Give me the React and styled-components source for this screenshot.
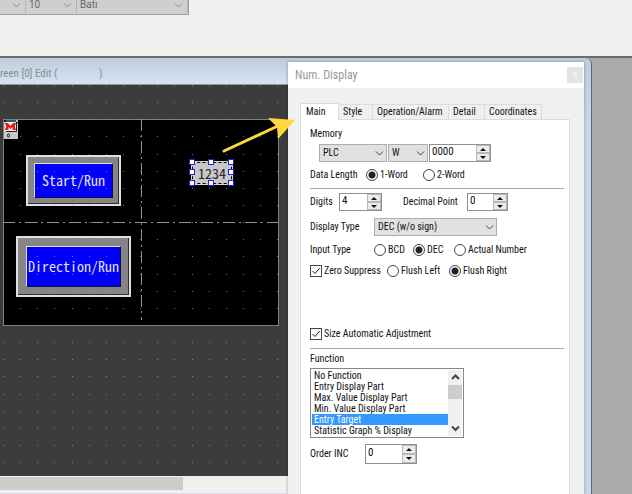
import React from "react";
import styled, { createGlobalStyle, css } from "styled-components";

const Global = createGlobalStyle`
  * { box-sizing: border-box; }
  body { margin: 0; background: #f0f0f0; }
  button, input, select { font: inherit; color: inherit; margin: 0; }
`;

const Desktop = styled.div`
  position: relative;
  display: flex;
  flex-direction: column;
  min-height: 100vh;
  overflow: hidden;
  background: #f0f0f0;
  font: 10px/12px "Roboto Condensed", Lato, sans-serif;
  color: #111;
`;

const Ribbon = styled.header`
  height: 56px;
`;

const FontBar = styled.div`
  display: flex;
  width: 189px;
  height: 15px;
  border-right: 1px solid #a0a0a0;
  border-bottom: 1px solid #a0a0a0;
  background: #d0d0d0;
  font: 10px/12px Roboto, sans-serif;
  color: #686868;
`;

const Drop = styled.span`
  position: relative;
  display: inline-flex;
  flex: ${(p) => (p.$grow ? "1" : "none")};
  width: ${(p) => p.$w}px;
  height: 18px;

  select {
    appearance: none;
    width: 100%;
    height: 100%;
    padding: 0 3px;
    border: 1px solid #adadad;
    border-radius: 0;
    background: #e1e1e1;
    line-height: 14px;
  }

  svg {
    position: absolute;
    right: 3px;
    top: 6px;
    pointer-events: none;
  }

  ${(p) =>
    p.$flat &&
    css`
      height: 13px;
      border-right: 1px solid #b4b4b4;
      select { border: 0; padding-bottom: 3px; background: #cfcfcf; line-height: 10px; }
      svg { top: 2px; right: 4px; }
    `}
`;

const Workspace = styled.main`
  flex: 1;
  display: flex;
  padding-right: 40px;
  border-top: 2px solid #6c6c6c;
  background: #ababab;
`;

const EditorWindow = styled.section`
  flex: 1;
  min-width: 0;
  display: flex;
  flex-direction: column;
  padding-right: 7px;
  border-right: 1px solid #5f666e;
  border-top-right-radius: 6px;
  background: linear-gradient(#bccddc, #c9d8e8 60px);
`;

const EditorTitle = styled.h1`
  margin: 0;
  height: 27px;
  padding-top: 8px;
  border-bottom: 1px solid #8e979f;
  background: linear-gradient(#bccddc, #d6e3f1);
  font: 11px/16px "Roboto Condensed", Roboto, sans-serif;
  color: #858d94;
  white-space: nowrap;
`;

const Blank = styled.span`
  display: inline-block;
  width: 39px;
`;

const Canvas = styled.div`
  position: relative;
  flex: 1;
  background: #3c3c3c;
  overflow: hidden;
`;

const Dots = styled.svg`
  position: absolute;
  inset: 0;
  width: 100%;
  height: 100%;
  pointer-events: none;
`;

const ScreenArea = styled.svg`
  position: absolute;
  left: 3px;
  top: 34px;
`;

const HmiButton = styled.button`
  position: absolute;
  left: ${(p) => p.$x}px;
  top: ${(p) => p.$y}px;
  width: ${(p) => p.$w}px;
  height: ${(p) => p.$h}px;
  padding: ${(p) => p.$pad}px;
  border: 2px solid #e0e0e0;
  box-shadow: inset -1px -1px 0 #303030;
  background: #858585;

  span {
    display: flex;
    align-items: center;
    justify-content: center;
    height: 100%;
    padding-bottom: 2px;
    border: 1px solid;
    border-color: #e0e0e0 #101040 #101040 #e0e0e0;
    background: #0000fa;
    color: #e4e4ff;
    font: 300 14px/16px "Noto Sans Mono CJK JP", "Liberation Mono", monospace;
    white-space: nowrap;
  }
`;

const NumberPart = styled.div`
  position: absolute;
  left: 192px;
  top: 77px;
  width: 40px;
  height: 22px;
  border: 1px dashed #000;
  outline: 1px solid #d8d8d8;
  background: #c8c8c8;
  color: #222;
  font: 300 14px/20px "Noto Sans Mono CJK JP", "Liberation Mono", monospace;
  text-align: center;
`;

const Handles = styled.svg`
  position: absolute;
  left: 189px;
  top: 74px;
`;

const HScroll = styled.div`
  height: 18px;
  padding: 1px 0 3px;
  background: #f0f0f0;
  border-bottom: 1px solid #d5e3f1;

  i { display: block; width: 183px; height: 13px; background: #cdcdcd; }
`;

const Dialog = styled.section`
  position: absolute;
  right: 48px;
  top: 62px;
  bottom: 0;
  width: 296px;
  display: flex;
  flex-direction: column;
  background: #f0f0f0;
  box-shadow: 0 0 3px rgba(0, 0, 0, 0.35);
`;

const DialogTitle = styled.header`
  display: flex;
  align-items: center;
  justify-content: space-between;
  height: 26px;
  padding: 0 1px 0 7px;
  background: #fff;

  h2 { margin: 0; font: 12px/16px "Roboto Condensed", Roboto, sans-serif; color: #999; }
`;

const Close = styled.button`
  width: 16px;
  height: 16px;
  padding: 0;
  border: 0;
  background: #e4e4e4;
  color: #f8f8f8;
  line-height: 14px;
`;

const Tabs = styled.div`
  display: flex;
  align-items: flex-end;
  height: 31px;
  padding-left: 12px;
`;

const Tab = styled.button`
  height: ${(p) => (p.$on ? 17 : 15)}px;
  margin-bottom: ${(p) => (p.$on ? -1 : 0)}px;
  width: ${(p) => p.$w}px;
  padding: 0 0 0 ${(p) => (p.$on ? 5 : 4)}px;
  border: 1px solid #dcdcdc;
  border-left-width: ${(p) => (p.$on ? 1 : 0)}px;
  border-bottom: 0;
  background: ${(p) => (p.$on ? "#fff" : "#f0f0f0")};
  white-space: nowrap;
  text-align: left;
  z-index: 1;
`;

const Panel = styled.div`
  flex: 1;
  margin: 0 14px 0 12px;
  padding: 8px 5px 0 9px;
  border: 1px solid #dcdcdc;
  border-bottom: 0;
  background: #fff;
`;

const Group = styled.div`
  display: grid;
  gap: ${(p) => p.$gap}px;
  padding: ${(p) => p.$pad || 0}px 0 4px;
`;

const Rule = styled.hr`
  margin: 0;
  border: 0;
  border-top: 1px solid #a8a8a8;
`;

const Row = styled.div`
  display: flex;
  align-items: center;
  height: ${(p) => p.$h || 18}px;
  padding-left: ${(p) => p.$indent || 0}px;
  gap: ${(p) => p.$gap || 0}px;
`;

const Label = styled.label`
  width: ${(p) => (p.$w ? p.$w + "px" : "auto")};
  white-space: nowrap;
`;

const Choice = styled.label`
  display: flex;
  align-items: center;
  gap: 2px;
  width: ${(p) => (p.$w ? p.$w + "px" : "auto")};
  white-space: nowrap;

  input {
    appearance: none;
    flex: none;
    width: 12px;
    height: 12px;
    border: 1px solid #444;
    background: #fff;
  }
  input[type="radio"] { border-radius: 50%; }
  input[type="radio"]:checked { background: radial-gradient(circle, #222 3px, #fff 4px); }
  input[type="checkbox"]:checked {
    background: #fff url("data:image/svg+xml,%3Csvg xmlns='http://www.w3.org/2000/svg' viewBox='0 0 10 10'%3E%3Cpath d='M1.5 5l2.5 2.5L8.7 2' fill='none' stroke='%23222'/%3E%3C/svg%3E");
  }
`;

const SpinBox = styled.span`
  display: flex;
  width: ${(p) => p.$w}px;
  height: ${(p) => p.$h || 18}px;
  border: 1px solid #8f8f8f;
  background: #fff;

  input {
    flex: 1;
    min-width: 0;
    padding: 0 2px 2px;
    border: 0;
    background: none;
    font-size: 11px;
  }
`;

const Arrows = styled.span`
  display: grid;
  grid-template-rows: 1fr 1fr;
  width: 14px;
  background: #f0f0f0;

  button {
    display: flex;
    align-items: center;
    justify-content: center;
    min-height: 0;
    padding: 0;
    border: 1px solid #b8b8b8;
    background: #ececec;
  }
`;

const ListBox = styled.div`
  display: flex;
  width: 154px;
  height: 70px;
  padding: 1px;
  border: 1px solid #828790;

  select {
    flex: 1;
    height: 66px;
    padding: 0;
    border: 0;
    outline: 0;
    overflow: hidden;
    scrollbar-width: none;
    background: #fff;
  }
  option { min-height: 11px; height: 11px; padding: 0 2px; line-height: 11px; }
  option:checked { background: linear-gradient(#3399ff, #3399ff); color: #fff; }
`;

const Track = styled.div`
  display: flex;
  flex-direction: column;
  width: 14px;
  background: #f0f0f0;

  button { height: 15px; padding: 0; border: 0; background: none; display: flex; align-items: center; justify-content: center; }
  i { height: 14px; background: #cdcdcd; }
  button:last-child { margin-top: auto; }
`;

const Pointer = styled.svg`
  position: absolute;
  right: 332px;
  top: 110px;
  pointer-events: none;
`;

function Chevron({ up, color = "#444", width = 1 }) {
  return (
    <svg width="9" height="7" viewBox="0 0 9 7" aria-hidden="true">
      <path d={up ? "M1 5l3.5-3.5L8 5" : "M1 1.5L4.500 5 8 1.5"} fill="none" stroke={color} strokeWidth={width} />
    </svg>
  );
}

function Dropdown({ value, flat, w, grow, id, label }) {
  return (
    <Drop $w={w} $flat={flat} $grow={grow}>
      <select id={id} aria-label={label} defaultValue={value}>
        <option>{value}</option>
      </select>
      <Chevron color={flat ? "#8c8c8c" : "#444"} />
    </Drop>
  );
}

function Spin({ id, value, w, h, label }) {
  return (
    <SpinBox $w={w} $h={h}>
      <input id={id} aria-label={label} defaultValue={value} />
      <Arrows>
        <button aria-label="Increase">
          <svg width="6" height="3"><path d="M0 3L3 0l3 3z" fill="#111" /></svg>
        </button>
        <button aria-label="Decrease">
          <svg width="6" height="3"><path d="M0 0l3 3 3-3z" fill="#111" /></svg>
        </button>
      </Arrows>
    </SpinBox>
  );
}

function Radio({ name, children, checked, w }) {
  return (
    <Choice $w={w}>
      <input type="radio" name={name} defaultChecked={checked} />
      {children}
    </Choice>
  );
}

const functions = [
  "No Function",
  "Entry Display Part",
  "Max. Value Display Part",
  "Min. Value Display Part",
  "Entry Target",
  "Statistic Graph % Display",
];

const tabs = [
  ["Main", 39],
  ["Style", 34],
  ["Operation/Alarm", 76],
  ["Detail", 36],
  ["Coordinates", 57],
];

const columns = Array.from({ length: 40 }, (_, i) => Math.round(4 + i * 17.14));
const rows = Array.from({ length: 40 }, (_, i) => Math.round(i * 17.14));

export default function App() {
  return (
    <Desktop>
      <Global />
      <Ribbon>
        <FontBar>
          <Dropdown flat w={26} value="" label="Font" />
          <Dropdown flat w={51} value="10" label="Size" />
          <Dropdown flat grow value="Batı" label="Script" />
        </FontBar>
      </Ribbon>
      <Workspace>
        <EditorWindow>
          <EditorTitle>reen [0] Edit (<Blank /> )</EditorTitle>
          <Canvas>
            <ScreenArea width="276" height="207" aria-hidden="true">
              <rect x="0.5" y="0.5" width="275" height="206" fill="#000" stroke="#808080" />
              <path d="M138.5 0V201M0 103.5H275" stroke="#909090" strokeDasharray="12 4 2 4" fill="none" />
              <rect x="1" y="1" width="14" height="19" fill="#c8c8c8" />
              <path d="M3 1h10v2H3z" fill="#0b6b70" />
              <path d="M1 1h2v2H1zM13 3h2v1h-2z" fill="#111" />
              <rect x="2" y="3" width="11" height="9" fill="#f4f4f4" />
              <path d="M2 11V9.500h1v-4H2V4h3l2.500 3L10 4h3v1.500h-1v4h1V11H9.500V8l-2 2-2-2v3z" fill="#f01818" />
              <path d="M13.5 4v8.500H3" stroke="#222" fill="none" />
              <ellipse cx="5.500" cy="16.500" rx="1" ry="1.500" fill="none" stroke="#111" />
            </ScreenArea>
            <HmiButton $x={26} $y={70} $w={95} $h={51} $pad={6}><span>Start/Run</span></HmiButton>
            <HmiButton $x={16} $y={151} $w={115} $h={61} $pad={8}><span>Direction/Run</span></HmiButton>
            <Dots aria-hidden="true">
              {rows.map((y) => columns.map((x) => (
                <rect key={x + "-" + y} x={x - 1} y={y} width="1" height="1" fill="#a0a0a0" opacity="0.7" />
              )))}
            </Dots>
            <NumberPart>1234</NumberPart>
            <Handles width="46" height="28" aria-hidden="true">
              {[3, 22, 42].map((x) => [3, 13, 24].map((y) =>
                x === 22 && y === 13 ? null : (
                  <rect key={x + "-" + y} x={x - 2.5} y={y - 2.5} width="5" height="5" fill="#fff" stroke="#2222dd" />
                )
              ))}
            </Handles>
          </Canvas>
          <HScroll><i /></HScroll>
        </EditorWindow>
      </Workspace>

      <Dialog role="dialog" aria-label="Num. Display">
        <DialogTitle>
          <h2>Num. Display</h2>
          <Close aria-label="Close">×</Close>
        </DialogTitle>
        <Tabs role="tablist">
          {tabs.map(([name, w], i) => (
            <Tab key={name} role="tab" aria-selected={i === 0} $on={i === 0} $w={w}>{name}</Tab>
          ))}
        </Tabs>
        <Panel>
          <Group $gap={4}>
            <Label htmlFor="device">Memory</Label>
            <Row $indent={9} $gap={1}>
              <Dropdown id="device" w={68} value="PLC" />
              <Dropdown w={40} value="W" label="Area" />
              <Spin w={62} value="0000" label="Address" />
            </Row>
            <Row>
              <Label as="span" $w={56}>Data Length</Label>
              <Radio name="length" w={57} checked>1-Word</Radio>
              <Radio name="length">2-Word</Radio>
            </Row>
          </Group>
          <Rule />
          <Group $gap={7} $pad={4}>
            <Row>
              <Label htmlFor="digits" $w={29}>Digits</Label>
              <Spin id="digits" w={43} value="4" />
              <Row $indent={21}>
                <Label htmlFor="point" $w={64}>Decimal Point</Label>
                <Spin id="point" w={41} value="0" />
              </Row>
            </Row>
            <Row>
              <Label htmlFor="type" $w={64}>Display Type</Label>
              <Dropdown id="type" w={123} value="DEC (w/o sign)" />
            </Row>
            <Row $h={14}>
              <Label as="span" $w={64}>Input Type</Label>
              <Radio name="input" w={39}>BCD</Radio>
              <Radio name="input" w={41} checked>DEC</Radio>
              <Radio name="input">Actual Number</Radio>
            </Row>
            <Row $h={14}>
              <Choice $w={77}><input type="checkbox" defaultChecked />Zero Suppress</Choice>
              <Radio name="flush" w={62}>Flush Left</Radio>
              <Radio name="flush" checked>Flush Right</Radio>
            </Row>
          </Group>
          <Group $gap={0} $pad={42}>
            <Row $h={20}>
              <Choice><input type="checkbox" defaultChecked />Size Automatic Adjustment</Choice>
            </Row>
          </Group>
          <Rule />
          <Group $gap={3} $pad={4}>
            <Label htmlFor="function">Function</Label>
            <ListBox>
              <select id="function" size="6" defaultValue="Entry Target">
                {functions.map((f) => <option key={f}>{f}</option>)}
              </select>
              <Track>
                <button aria-label="Scroll up"><Chevron up width={2} /></button>
                <i />
                <button aria-label="Scroll down"><Chevron width={2} /></button>
              </Track>
            </ListBox>
          </Group>
          <Row $h={24}>
            <Label htmlFor="order" $w={55}>Order INC</Label>
            <Spin id="order" w={52} h={20} value="0" />
          </Row>
        </Panel>
      </Dialog>

      <Pointer width="80" height="50" aria-hidden="true">
        <path d="M4 41L60 15" stroke="#ffd83d" strokeWidth="3" strokeLinecap="round" />
        <path d="M48 8L75 10 58 29 57 17z" fill="#ffd83d" />
      </Pointer>
    </Desktop>
  );
}
